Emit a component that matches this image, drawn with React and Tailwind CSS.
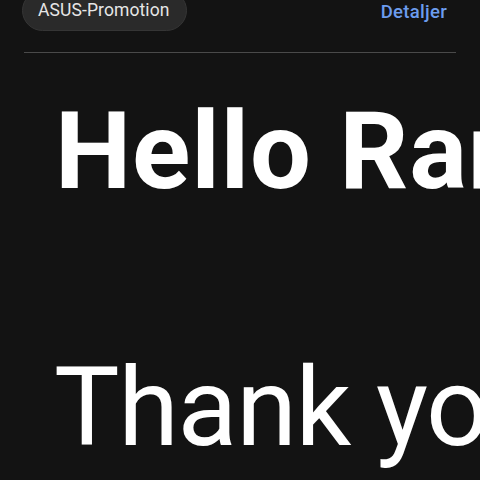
import React from 'react';

const App = () => {
  return (
    <div className="w-[480px] h-[480px] overflow-hidden bg-[#131313] font-['Roboto',sans-serif] text-white">
      <div className="flex items-center justify-between pl-[22px] pr-[33px]">
        <div className="-mt-[10px] h-[41px] flex items-end pb-[7px] pl-[15px] pr-[16px] rounded-full bg-[#2a2a2a] border border-[#353535] text-[17.5px] text-[#e6e6e6] tracking-[0.1px]">
          ASUS-Promotion
        </div>
        <a className="-mt-[6px] text-[18.5px] font-medium tracking-[0.3px] text-[#6c9cee]">Detaljer</a>
      </div>
      <div className="mx-[24px] mt-[21px] h-px bg-[#4a4a4a]" />
      <h1 className="mt-[38px] pl-[55px] whitespace-nowrap text-[108px] leading-[120px] font-bold tracking-[0.8px]">
        Hello Randi,
      </h1>
      <p className="mt-[137px] pl-[54px] whitespace-nowrap text-[110px] leading-[120px] font-normal tracking-[-1.3px]">
        Thank you
      </p>
    </div>
  );
};

export default App;
